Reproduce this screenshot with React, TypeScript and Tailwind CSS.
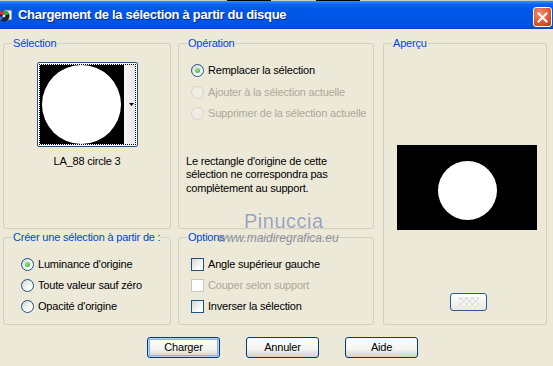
import clsx from "clsx";

function GroupBox({
  label,
  className,
  children,
}: {
  label: string;
  className?: string;
  children?: React.ReactNode;
}) {
  return (
    <div className={clsx("relative rounded-[3px] border border-[#D0D0BF]", className)}>
      <span className="absolute -top-[7px] left-[8px] bg-[#ECE9D8] px-px leading-[13px] text-[#0046D5]">
        {label}
      </span>
      {children}
    </div>
  );
}

function Radio({ checked, disabled }: { checked?: boolean; disabled?: boolean }) {
  return (
    <span
      className={clsx(
        "flex h-[13px] w-[13px] shrink-0 items-center justify-center rounded-full border",
        disabled
          ? "border-[#D6D3C4] bg-[#EFEDE3]"
          : "border-[#1C5180] bg-[linear-gradient(135deg,#D6D6CE,#FFFFFF_75%)]"
      )}
    >
      {checked && (
        <span className="h-[5px] w-[5px] rounded-full bg-[radial-gradient(circle_at_40%_35%,#9BE89B,#21A121)]" />
      )}
    </span>
  );
}

function Check({ disabled }: { disabled?: boolean }) {
  return (
    <span
      className={clsx(
        "h-[13px] w-[13px] shrink-0 border",
        disabled
          ? "border-[#CAC8BB] bg-white"
          : "border-[#1C5180] bg-[linear-gradient(135deg,#D6D6CE,#FFFFFF_75%)]"
      )}
    />
  );
}

function Option({
  children,
  disabled,
  control,
}: {
  children: React.ReactNode;
  disabled?: boolean;
  control: React.ReactNode;
}) {
  return (
    <div className={clsx("flex h-[21px] items-center", disabled && "text-[#ACA899]")}>
      {control}
      <span className="ml-[4px] leading-[13px]">{children}</span>
    </div>
  );
}

function Button({ children, isDefault }: { children: React.ReactNode; isDefault?: boolean }) {
  return (
    <button
      className={clsx(
        "flex h-[21px] w-[73px] items-center justify-center rounded-[3px] border border-[#003C74] bg-[linear-gradient(180deg,#FFFFFF,#F3F3EF_60%,#D6D0C5)] text-black",
        isDefault && "shadow-[inset_0_0_0_1px_#B9D1FA,inset_0_0_0_2px_#8CB0EC]"
      )}
    >
      {children}
    </button>
  );
}

export default function App() {
  return (
    <div className="relative h-[366px] w-[553px] overflow-hidden bg-[#ECE9D8] font-['Liberation_Sans',Arial,sans-serif] text-[11px] tracking-[-0.2px] text-black">
      {/* bit of the window above */}
      <div className="flex h-px bg-[#C9CBD0]">
        <div className="ml-[227px] w-[44px] bg-black" />
        <div className="ml-[45px] w-[44px] bg-black" />
      </div>

      {/* title bar */}
      <div className="flex h-[28px] items-center bg-[linear-gradient(180deg,#3C8CF8_0%,#0A62F0_12%,#0058E8_30%,#0055E5_70%,#0050DA_90%,#0043C0_100%)]">
        <svg width="14" height="14" viewBox="0 0 14 14" className="ml-[-2px] mt-[2px]">
          <rect x="6" y="1" width="8" height="10" fill="#E8ECF4" stroke="#5A6A8A" strokeWidth="1" />
          <circle cx="6" cy="7" r="5.5" fill="#1E2430" />
          <path d="M6 7 L6 1.5 A5.5 5.5 0 0 1 11 5 Z" fill="#2FA84A" />
          <path d="M6 7 L1 4.5 A5.5 5.5 0 0 1 6 1.5 Z" fill="#C83A3A" />
          <path d="M6 7 L3 11.5 A5.5 5.5 0 0 1 1 8 Z" fill="#3A6BD8" />
          <circle cx="6" cy="7" r="1.3" fill="#E8ECF4" />
        </svg>
        <span className="ml-[6px] text-[13px] font-bold tracking-[-0.3px] text-white [text-shadow:1px_1px_0_#0A2A8A]">
          Chargement de la sélection à partir du disque
        </span>
        <div className="ml-auto mr-[1px] mt-[4px] flex h-[20px] w-[19px] items-center justify-center rounded-[3px] border border-white bg-[radial-gradient(circle_at_35%_30%,#F0906A,#D9492A_70%,#B83818)]">
          <svg width="11" height="11" viewBox="0 0 11 11">
            <path d="M1.5 1.5 L9.5 9.5 M9.5 1.5 L1.5 9.5" stroke="white" strokeWidth="2" strokeLinecap="square" />
          </svg>
        </div>
      </div>

      {/* body */}
      <div className="pl-[3px] pt-[14px]">
        <div className="grid grid-cols-[168px_196px_166px] grid-rows-[186px_88px] gap-x-[7px] gap-y-[8px]">
          <GroupBox label="Sélection" className="flex flex-col items-center pt-[18px]">
            <div className="flex h-[85px] w-[101px] rounded-[2px] border border-[#1C5180] bg-white p-px">
              <div className="flex flex-1 border border-dotted border-black">
                <div className="flex w-[84px] items-end justify-center bg-black">
                  <div className="h-[79px] w-[79px] rounded-full bg-white" />
                </div>
                <div className="flex flex-1 items-center justify-end bg-[linear-gradient(90deg,#F6F6F6,#E6E6E6)] pr-[1px]">
                  <svg width="5" height="3" viewBox="0 0 5 3">
                    <path d="M0 0 H5 L2.5 3 Z" fill="black" />
                  </svg>
                </div>
              </div>
            </div>
            <div className="mt-[8px] leading-[13px]">LA_88 circle 3</div>
          </GroupBox>

          <GroupBox label="Opération" className="pl-[12px] pt-[16px]">
            <Option control={<Radio checked />}>Remplacer la sélection</Option>
            <div className="h-px" />
            <Option disabled control={<Radio disabled />}>
              Ajouter à la sélection actuelle
            </Option>
            <Option disabled control={<Radio disabled />}>
              Supprimer de la sélection actuelle
            </Option>
            <p className="-ml-[5px] mt-[31px] leading-[13.3px]">
              Le rectangle d'origine de cette
              <br />
              sélection ne correspondra pas
              <br />
              complètement au support.
            </p>
          </GroupBox>

          <GroupBox label="Aperçu" className="row-span-2 ml-[2px] flex flex-col items-start pt-[101px]">
            <div className="ml-[13px] flex h-[85px] w-[140px] items-center justify-center bg-black pt-[5px]">
              <div className="h-[59px] w-[59px] rounded-full bg-white" />
            </div>
            <div className="ml-[66px] mt-[63px] h-[18px] w-[37px] rounded-[3px] border border-[#2C5C94] bg-[linear-gradient(180deg,#FFFFFF,#E8E8E4)] p-[3px]">
              <div className="mx-auto h-full w-[20px] bg-[repeating-conic-gradient(#F4F4F4_0_25%,#E2E2E2_0_50%)] bg-[length:6px_6px]" />
            </div>
          </GroupBox>

          <GroupBox label="Créer une sélection à partir de :" className="pl-[17px] pt-[16px]">
            <Option control={<Radio checked />}>Luminance d'origine</Option>
            <Option control={<Radio />}>Toute valeur sauf zéro</Option>
            <Option control={<Radio />}>Opacité d'origine</Option>
          </GroupBox>

          <GroupBox label="Options" className="pl-[12px] pt-[16px]">
            <Option control={<Check />}>Angle supérieur gauche</Option>
            <Option disabled control={<Check disabled />}>
              Couper selon support
            </Option>
            <Option control={<Check />}>Inverser la sélection</Option>
          </GroupBox>
        </div>

        <div className="ml-[144px] mt-[12px] flex gap-[26px]">
          <Button isDefault>Charger</Button>
          <Button>Annuler</Button>
          <Button>Aide</Button>
        </div>
      </div>

      {/* watermark */}
      <div className="pointer-events-none absolute left-[244px] top-[210px] text-[20px] leading-[22px] tracking-[0.5px] text-[#9CA1B6] [text-shadow:0_0_1px_#ffffff]">
        Pinuccia
      </div>
      <div className="pointer-events-none absolute left-[218px] top-[232px] text-[12px] italic leading-[13px] tracking-normal text-[#858896] opacity-90">
        www.maidiregrafica.eu
      </div>
    </div>
  );
}
